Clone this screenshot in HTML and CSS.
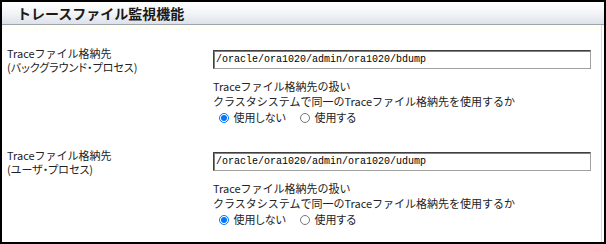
FILE: index.html
```html
<!DOCTYPE html>
<html>
<head>
  <title>トレースファイル監視機能</title>
  <link rel="stylesheet" href="styles.css">
</head>
<body>
  <div class="panel">
    <div class="panel-title">トレースファイル監視機能</div>
    <div class="panel-body">

      <div class="form-row">
        <div class="form-label">Traceファイル格納先<br><span class="label-sub">(バックグラウンド・プロセス)</span></div>
        <div class="form-field">
          <input type="text" class="path-input" value="/oracle/ora1020/admin/ora1020/bdump">
          <div class="field-note">
            Traceファイル格納先の扱い<br>
            クラスタシステムで同一のTraceファイル格納先を使用するか
          </div>
          <div class="radio-group">
            <label><input type="radio" name="bgShared" value="no" checked> 使用しない</label>
            <label><input type="radio" name="bgShared" value="yes"> 使用する</label>
          </div>
        </div>
      </div>

      <div class="form-row">
        <div class="form-label">Traceファイル格納先<br><span class="label-sub">(ユーザ・プロセス)</span></div>
        <div class="form-field">
          <input type="text" class="path-input" value="/oracle/ora1020/admin/ora1020/udump">
          <div class="field-note">
            Traceファイル格納先の扱い<br>
            クラスタシステムで同一のTraceファイル格納先を使用するか
          </div>
          <div class="radio-group">
            <label><input type="radio" name="userShared" value="no" checked> 使用しない</label>
            <label><input type="radio" name="userShared" value="yes"> 使用する</label>
          </div>
        </div>
      </div>

    </div>
  </div>
</body>
</html>
```

FILE: styles.css
```css
body {
  margin: 0;
  background-color: #ffffff;
  font-family: "Noto Sans CJK JP", "DejaVu Sans", sans-serif;
  font-size: 11px;
  color: #222222;
}

.panel {
  width: 602px;
  height: 240px;
  border: 2px solid #000000;
  background-color: #ffffff;
  overflow: hidden;
}

.panel-title {
  height: 22px;
  padding-left: 15px;
  line-height: 22px;
  font-size: 14px;
  font-weight: bold;
  color: #1a1a1a;
  background: linear-gradient(#ffffff, #f2f4f7 50%, #dde2e9);
  border-bottom: 1px solid #9da4ad;
}

.panel-body {
  border-right: 1px solid #d8d8d8;
  margin-right: 2px;
  padding-top: 21px;
  background: linear-gradient(#fffff2, #ffffff 8px);
  height: 200px;
}

.form-row {
  display: flex;
  margin-bottom: 23px;
}

.form-label {
  flex: 0 0 206px;
  padding-left: 5px;
  line-height: 14px;
}

.label-sub {
  font-feature-settings: "palt";
}

.form-field {
  flex: 1;
  padding-top: 4px;
}

.path-input {
  display: block;
  width: 378px;
  height: 19px;
  box-sizing: border-box;
  margin: 0;
  padding: 0 2px;
  font-family: "Liberation Mono", monospace;
  font-size: 10px;
  color: #000000;
  border: 1px solid #a0a0a0;
  border-top-color: #404040;
  border-left-color: #404040;
  box-shadow: inset 1px 1px 0 #808080;
}

.field-note {
  margin-top: 10px;
  line-height: 15px;
}

.radio-group {
  display: flex;
  gap: 14px;
  line-height: 16px;
  margin-left: 6px;
  font-feature-settings: "palt";
}

.radio-group input {
  width: 10px;
  height: 10px;
  margin: 0 2px 0 0;
  vertical-align: -1px;
}
```
